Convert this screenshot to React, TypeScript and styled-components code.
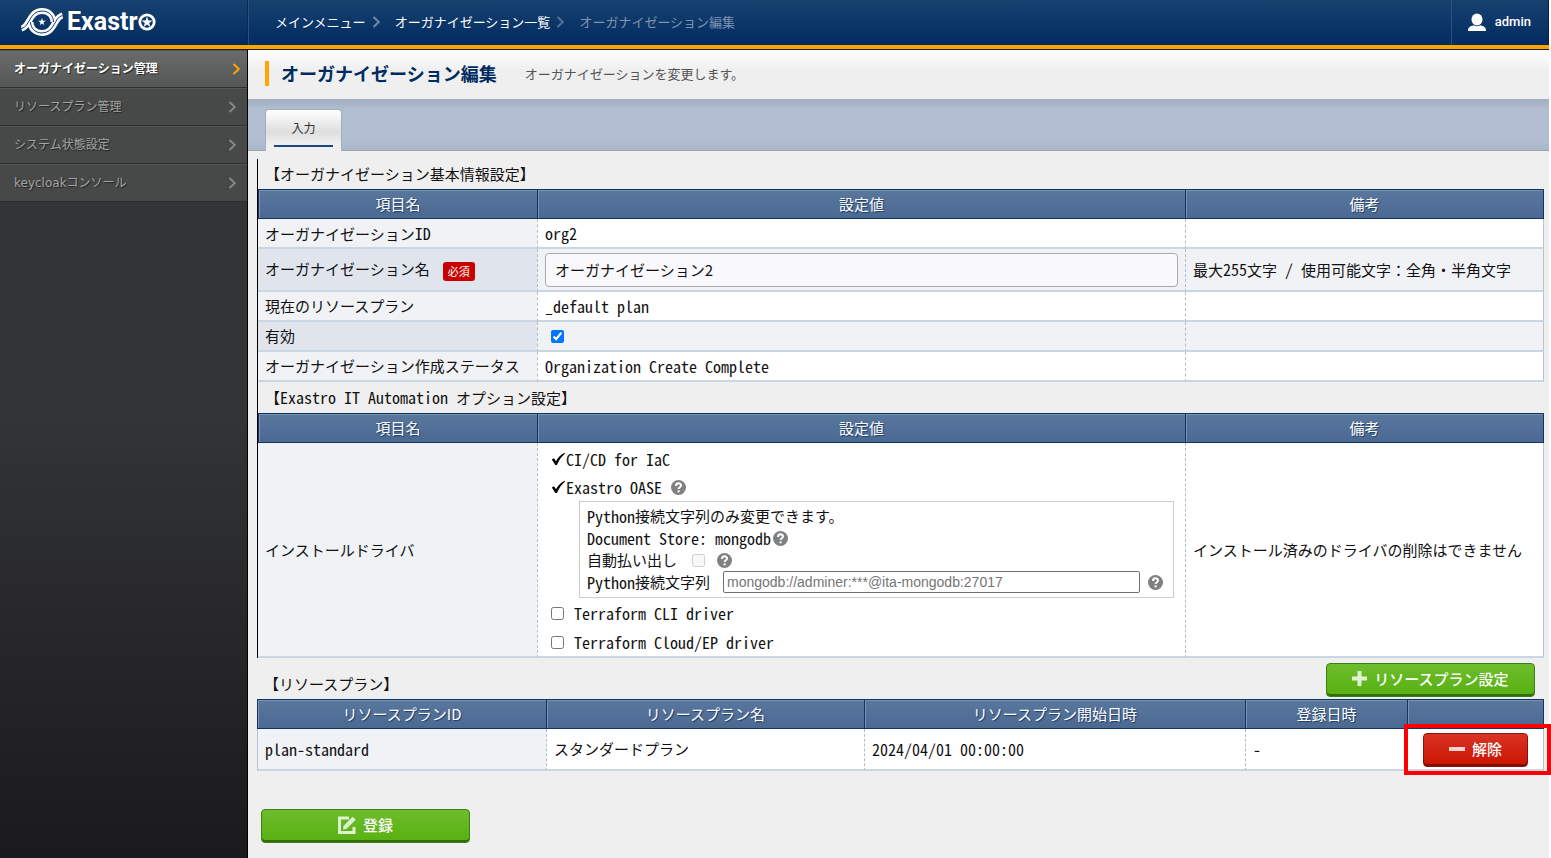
import React from "react";
import styled, { createGlobalStyle, css } from "styled-components";

const UI_FONT = '"Noto Sans CJK JP", "Noto Sans", sans-serif';

const GlobalStyle = createGlobalStyle`
  *, *::before, *::after { box-sizing: border-box; }
  html { background: #fff; }
  body { margin: 0; background: #fff; color: #222; font-family: ${UI_FONT}; font-size: 15px; }
  a { color: inherit; text-decoration: none; }
  h1, h2, p, ul, ol { margin: 0; padding: 0; font-weight: 400; }
  ul, ol { list-style: none; }
`;

const Page = styled.div`
  display: flex;
  flex-direction: column;
  min-height: 100vh;
  padding-right: 2px;
`;

const Header = styled.header`
  display: flex;
  height: 50px;
  flex: none;
  background: linear-gradient(#17416f, #002a60);
  border-bottom: 1px solid #1c1c1c;
  box-shadow: inset 0 -4px 0 #ffa500;
`;

const LogoLink = styled.a`
  display: flex;
  align-items: center;
  width: 248px;
  height: 45px;
  padding: 0 0 2px 20px;
  border-right: 1px solid #0a2a55;
  color: #fff;
  font: 700 25px/40px Roboto, sans-serif;
`;

const LogoMark = styled.svg`
  width: 44px;
  height: 32px;
  margin-right: 3px;
`;

const LogoStar = styled.svg`
  width: 18px;
  height: 18px;
`;

const Crumbs = styled.nav`
  flex: 1;
  height: 45px;
  border-left: 1px solid #2c5180;
  ol { display: flex; align-items: center; height: 43px; padding-left: 26px; }
  li { display: flex; align-items: center; color: #fff; font-size: 13px; line-height: 20px; }
  li > svg { margin: 0 14px 0 6px; }
`;

const CurrentCrumb = styled.span`
  color: #7f93b2;
`;

const UserButton = styled.button`
  display: flex;
  align-items: center;
  gap: 9px;
  height: 45px;
  padding: 0 17px 2px 16px;
  border: 0;
  border-left: 1px solid #2c5180;
  border-right: 1px solid #04204a;
  background: none;
  color: #fff;
  font: 500 13px/20px Roboto, sans-serif;
`;

const Body = styled.div`
  display: flex;
  flex: 1;
`;

const Sidebar = styled.nav`
  flex: none;
  width: 248px;
  border-right: 1px solid #000;
  background: linear-gradient(#333436, #333436 45%, #1a1a1c);
`;

const MenuLink = styled.a<{ $active?: boolean }>`
  display: flex;
  align-items: center;
  justify-content: space-between;
  height: 38px;
  padding: 0 10px 0 14px;
  border-top: 1px solid #555756;
  border-bottom: 1px solid #2c2d2d;
  background: #474948;
  color: #a3a3a3;
  font: 400 12px/20px "DejaVu Sans", ${UI_FONT};
  text-shadow: 1px 1px 1px #222;
  ${(p) =>
    p.$active &&
    css`
      padding-right: 6px;
      background: linear-gradient(#6a6c6b, #555756);
      color: #fff;
      font-weight: 700;
    `}
`;

const Main = styled.main`
  flex: 1;
  min-width: 0;
  background: #efefef;
`;

const TitleBar = styled.div`
  display: flex;
  align-items: center;
  height: 49px;
  padding: 0 0 2px 17px;
  background: linear-gradient(#fff, #efefef 20px);
`;

const Title = styled.h1`
  padding-left: 12px;
  border-left: 4px solid #ffa500;
  color: #002b62;
  font-size: 18px;
  font-weight: 700;
  line-height: 25px;
`;

const Lead = styled.p`
  margin-left: 28px;
  color: #555;
  font-size: 13px;
  line-height: 20px;
`;

const TabBar = styled.div`
  display: flex;
  align-items: flex-end;
  height: 52px;
  padding-left: 17px;
  border-bottom: 1px solid #9ba3af;
  background: linear-gradient(#9fadbf, #b1bdd0 10px, #b1bdd0 42px, #a9b6c8);
`;

const Tab = styled.button`
  width: 77px;
  height: 42px;
  margin-bottom: -1px;
  padding: 0 8px 4px;
  border: 1px solid #a5aebb;
  border-bottom: 0;
  border-radius: 4px 4px 0 0;
  background: linear-gradient(#fff, #dedede 22px, #efefef 34px);
  color: #333;
  font: 400 12px/35px ${UI_FONT};
`;

const TabLabel = styled.span`
  display: block;
  border-bottom: 2px solid #1c4780;
`;

const Content = styled.div`
  padding: 8px 5px 17px 9px;
`;

const Framed = styled.div`
  border-left: 1px solid #000;
`;

const SectionTitle = styled.h2`
  padding-left: 7px;
  color: #111;
  font-size: 15px;
  line-height: 30px;
`;

const Latin = styled.span`
  font-size: 16px;
  font-feature-settings: "hwid";
`;

const Grid = styled.table`
  width: 100%;
  table-layout: fixed;
  border-collapse: separate;
  border-spacing: 0;
  color: #111;
  line-height: 22px;
`;

const Col = styled.col<{ $w?: number }>`
  width: ${(p) => (p.$w ? `${p.$w}px` : "auto")};
`;

const HeadCell = styled.th`
  height: 30px;
  padding: 0;
  border: solid #0e3468;
  border-width: 1px 0 1px 1px;
  background: linear-gradient(#5a779e, #4c6a91);
  box-shadow: inset 1px 1px 0 #7c92b1;
  color: #fff;
  font-size: 15px;
  font-weight: 400;
  line-height: 26px;
  text-shadow: 1px 1px 1px #1d3c66;
  &:last-child { border-right-width: 1px; }
`;

const Row = styled.tr<{ $h?: number; $alt?: boolean }>`
  height: ${(p) => p.$h || 30}px;
  > th, > td {
    padding: 0 7px;
    border-bottom: 2px solid #cad6e2;
    text-align: left;
    font-weight: 400;
  }
  > th { background: ${(p) => (p.$alt ? "#e0e5ed" : "#f0f2f6")}; }
  > td {
    border-left: 1px dashed #aebcd2;
    background: ${(p) => (p.$alt ? "#f0f2f6" : "#fff")};
  }
  > td:last-child { border-right: 1px solid #b4c4d6; }
`;

const PlanGrid = styled(Grid)`
  tbody th { border-left: 1px solid #b4c4d6; }
`;

const Required = styled.span`
  display: inline-block;
  margin-left: 13px;
  padding: 0 5px;
  border-radius: 3px;
  background: #c80000;
  color: #fff;
  font-size: 11px;
  line-height: 19px;
  vertical-align: middle;
`;

const NameInput = styled.input`
  display: block;
  width: 100%;
  height: 34px;
  padding: 0 9px;
  border: 1px solid #aaa;
  border-radius: 4px;
  background: #f9f9fb;
  color: #111;
  font: 400 15px/22px ${UI_FONT};
`;

const Check = styled.input`
  display: block;
  flex: none;
  width: 13px;
  height: 13px;
  margin: 0 10px 0 6px;
`;

const Drivers = styled.ul`
  padding-top: 2px;
`;

const Driver = styled.li<{ $h: number }>`
  display: flex;
  align-items: center;
  height: ${(p) => p.$h}px;
  > label { display: flex; align-items: center; }
`;

const Installed = styled.svg`
  width: 15px;
  height: 14px;
  margin-left: 6px;
`;

const Detail = styled.div`
  margin: 0 4px 0 34px;
  padding: 3px 7px 4px;
  border: 1px solid #ccc;
`;

const DetailRow = styled.div`
  display: flex;
  align-items: center;
  height: 22px;
  > label { display: flex; align-items: center; flex: none; margin-right: 9px; }
`;

const Connection = styled.input`
  flex: 1;
  min-width: 0;
  height: 22px;
  margin: 0 8px 0 4px;
  padding: 0 3px;
  border: 1px solid #6f6f6f;
  border-radius: 2px;
  background: #fff;
  font: 400 14px/18px "Liberation Sans", sans-serif;
  &::placeholder { color: #757575; opacity: 1; }
`;

const HelpButton = styled.button<{ $gap?: number }>`
  display: block;
  flex: none;
  height: 15px;
  margin: 0 3px 0 ${(p) => p.$gap || 0}px;
  padding: 0;
  border: 0;
  background: none;
`;

const PlanHead = styled.div`
  display: flex;
  align-items: center;
  justify-content: space-between;
  height: 41px;
  padding: 2px 9px 0 0;
  ${SectionTitle} { padding: 8px 0 0 7px; }
`;

const ActionButton = styled.button<{ $danger?: boolean; $wide?: boolean }>`
  display: flex;
  align-items: center;
  justify-content: center;
  gap: 7px;
  width: ${(p) => (p.$wide ? "209px" : "105px")};
  height: 34px;
  padding: 0 0 2px;
  border: 1px solid ${(p) => (p.$danger ? "#8e1209" : "#3f7d17")};
  border-radius: 4px;
  background: ${(p) => (p.$danger ? "linear-gradient(#d93325, #cb1400)" : "linear-gradient(#6dbd2c, #58b011)")};
  box-shadow: inset 0 -2px 0 ${(p) => (p.$danger ? "#7f0d00" : "#2f6d06")};
  color: #fff;
  font: 500 15px/24px ${UI_FONT};
`;

const Release = styled.div`
  position: relative;
  padding: 2px 0 0 8px;
  &::after {
    content: "";
    position: absolute;
    inset: -7px -15px -8px -11px;
    border: 4px solid #f00;
    pointer-events: none;
  }
`;

const Footer = styled.div`
  padding: 38px 0 0 4px;
`;

const Chevron = ({ color }: { color: string }) => (
  <svg width="9" height="12" viewBox="0 0 9 12" fill="none" stroke={color} strokeWidth="2" aria-hidden="true">
    <path d="M1.5 1 6.8 6 1.5 11" />
  </svg>
);

const Help = ({ gap }: { gap?: number }) => (
  <HelpButton type="button" $gap={gap} aria-label="ヘルプ">
    <svg width="15" height="15" viewBox="0 0 15 15" aria-hidden="true">
      <circle cx="7.5" cy="7.5" r="7.5" fill="#808080" />
      <path d="M5 6c0-3.600 5-3.300 5-.5 0 1.700-2.400 1.700-2.400 3.600" fill="none" stroke="#fff" strokeWidth="2" />
      <rect x="6.600" y="10.300" width="2" height="2" fill="#fff" />
    </svg>
  </HelpButton>
);

const Tick = () => (
  <Installed viewBox="0 0 15 14" role="img" aria-label="インストール済み">
    <path d="M.8 7.500 3 6.300 5 9.300C7 5.500 10 2.500 13.600.8L14 1.400C10.500 4.500 8 8 6 13L4.300 13Z" fill="#000" />
  </Installed>
);

const STAR = "M0-5 1.200-1.600 4.800-1.500 1.900.6 2.900 4 0 2-2.900 4-1.900.6-4.800-1.500-1.200-1.600Z";
const RIBBON_TOP = "M1.500 22.500C10 21 9 5 22 5 29 5 33.500 10 33.500 16";
const RIBBON_BOTTOM = "M42.500 9.500C34 11 35 27 22 27 15 27 10.500 22 10.500 16";

const Head = ({ names }: { names: string[] }) => (
  <thead>
    <tr>
      {names.map((n, i) => (
        <HeadCell key={i} scope="col">{n}</HeadCell>
      ))}
    </tr>
  </thead>
);

const MENU = ["オーガナイゼーション管理", "リソースプラン管理", "システム状態設定", "keycloakコンソール"];

export default function App() {
  return (
    <Page lang="ja">
      <GlobalStyle />
      <Header>
        <LogoLink href="#">
          <LogoMark viewBox="0 0 44 32" fill="none" aria-hidden="true">
            <path d={RIBBON_TOP} stroke="#fff" strokeWidth="6" />
            <path d={RIBBON_BOTTOM} stroke="#fff" strokeWidth="6" />
            <path d={RIBBON_TOP} stroke="#12396c" strokeWidth="1" />
            <path d={RIBBON_BOTTOM} stroke="#12396c" strokeWidth="1" />
            <path d={STAR} transform="translate(22 16) scale(.8)" fill="#fff" />
          </LogoMark>
          Exastr
          <LogoStar viewBox="0 0 18 18" aria-label="o" role="img">
            <circle cx="9" cy="9" r="7.200" fill="none" stroke="#fff" strokeWidth="2.800" />
            <path d={STAR} transform="translate(9 9.300) scale(1.150)" fill="#fff" />
          </LogoStar>
        </LogoLink>
        <Crumbs aria-label="パンくず">
          <ol>
            <li><a href="#">メインメニュー</a><Chevron color="#7188a8" /></li>
            <li><a href="#">オーガナイゼーション一覧</a><Chevron color="#54709a" /></li>
            <li><CurrentCrumb aria-current="page">オーガナイゼーション編集</CurrentCrumb></li>
          </ol>
        </Crumbs>
        <UserButton type="button">
          <svg width="18" height="18" viewBox="0 0 18 18" fill="#fff" aria-hidden="true">
            <ellipse cx="9" cy="6.500" rx="5.500" ry="6" />
            <path d="M0 18C0 14.500 2 13.300 5.500 12.300 7.500 13.500 10.500 13.500 12.500 12.300 16 13.300 18 14.500 18 18Z" />
          </svg>
          admin
        </UserButton>
      </Header>
      <Body>
        <Sidebar>
          <ul>
            {MENU.map((m, i) => (
              <li key={m}>
                <MenuLink href="#" $active={i === 0}>
                  {m}
                  <Chevron color={i === 0 ? "#ffa500" : "#858585"} />
                </MenuLink>
              </li>
            ))}
          </ul>
        </Sidebar>
        <Main>
          <TitleBar>
            <Title>オーガナイゼーション編集</Title>
            <Lead>オーガナイゼーションを変更します。</Lead>
          </TitleBar>
          <TabBar>
            <Tab type="button"><TabLabel>入力</TabLabel></Tab>
          </TabBar>
          <Content>
            <Framed>
              <SectionTitle>【オーガナイゼーション基本情報設定】</SectionTitle>
              <Grid>
                <colgroup><Col $w={279} /><Col /><Col $w={359} /></colgroup>
                <Head names={["項目名", "設定値", "備考"]} />
                <tbody>
                  <Row>
                    <th scope="row">オーガナイゼーション<Latin>ID</Latin></th>
                    <td><Latin>org2</Latin></td>
                    <td />
                  </Row>
                  <Row $h={43} $alt>
                    <th scope="row"><label htmlFor="org-name">オーガナイゼーション名</label><Required>必須</Required></th>
                    <td><NameInput id="org-name" defaultValue="オーガナイゼーション2" /></td>
                    <td>最大<Latin>255</Latin>文字<Latin> / </Latin>使用可能文字：全角・半角文字</td>
                  </Row>
                  <Row>
                    <th scope="row">現在のリソースプラン</th>
                    <td><Latin>_default plan</Latin></td>
                    <td />
                  </Row>
                  <Row $alt>
                    <th scope="row"><label htmlFor="enabled">有効</label></th>
                    <td><Check id="enabled" type="checkbox" defaultChecked /></td>
                    <td />
                  </Row>
                  <Row>
                    <th scope="row">オーガナイゼーション作成ステータス</th>
                    <td><Latin>Organization Create Complete</Latin></td>
                    <td />
                  </Row>
                </tbody>
              </Grid>
              <SectionTitle>【<Latin>Exastro IT Automation </Latin>オプション設定】</SectionTitle>
              <Grid>
                <colgroup><Col $w={279} /><Col /><Col $w={359} /></colgroup>
                <Head names={["項目名", "設定値", "備考"]} />
                <tbody>
                  <Row>
                    <th scope="row">インストールドライバ</th>
                    <td>
                      <Drivers>
                        <Driver $h={28}><Tick /><Latin>CI/CD for IaC</Latin></Driver>
                        <Driver $h={28}><Tick /><Latin>Exastro OASE</Latin><Help gap={9} /></Driver>
                        <li>
                          <Detail>
                            <DetailRow><Latin>Python</Latin>接続文字列のみ変更できます。</DetailRow>
                            <DetailRow><Latin>Document Store: mongodb</Latin><Help gap={2} /></DetailRow>
                            <DetailRow>
                              <label htmlFor="auto-issue">自動払い出し</label>
                              <Check id="auto-issue" type="checkbox" disabled />
                              <Help gap={2} />
                            </DetailRow>
                            <DetailRow>
                              <label htmlFor="py-conn"><Latin>Python</Latin>接続文字列</label>
                              <Connection id="py-conn" placeholder="mongodb://adminer:***@ita-mongodb:27017" />
                              <Help />
                            </DetailRow>
                          </Detail>
                        </li>
                        <Driver $h={30}><label><Check type="checkbox" /><Latin>Terraform CLI driver</Latin></label></Driver>
                        <Driver $h={28}><label><Check type="checkbox" /><Latin>Terraform Cloud/EP driver</Latin></label></Driver>
                      </Drivers>
                    </td>
                    <td>インストール済みのドライバの削除はできません</td>
                  </Row>
                </tbody>
              </Grid>
            </Framed>
            <PlanHead>
              <SectionTitle>【リソースプラン】</SectionTitle>
              <ActionButton type="button" $wide>
                <svg width="15" height="15" viewBox="0 0 15 15" stroke="#e0f2d3" strokeWidth="4" aria-hidden="true"><path d="M7.500 0V15M0 7.500H15" /></svg>
                リソースプラン設定
              </ActionButton>
            </PlanHead>
            <PlanGrid>
              <colgroup><Col $w={289} /><Col $w={318} /><Col /><Col $w={162} /><Col $w={137} /></colgroup>
              <Head names={["リソースプランID", "リソースプラン名", "リソースプラン開始日時", "登録日時", ""]} />
              <tbody>
                <Row $h={42}>
                  <th scope="row"><Latin>plan-standard</Latin></th>
                  <td>スタンダードプラン</td>
                  <td><Latin>2024/04/01 00:00:00</Latin></td>
                  <td><Latin>-</Latin></td>
                  <td>
                    <Release>
                      <ActionButton type="button" $danger>
                        <svg width="16" height="4" viewBox="0 0 16 4" aria-hidden="true"><rect width="16" height="4" fill="#f6d3cf" /></svg>
                        解除
                      </ActionButton>
                    </Release>
                  </td>
                </Row>
              </tbody>
            </PlanGrid>
            <Footer>
              <ActionButton type="button" $wide>
                <svg width="18" height="18" viewBox="0 0 18 18" fill="none" stroke="#dff2d0" strokeWidth="3" aria-hidden="true">
                  <path d="M11 2H1.500V16.500H16V11" />
                  <path d="M5 13.500 5.500 10 14.500.8 17.800 3.800 8.300 13Z" fill="#dff2d0" stroke="none" />
                </svg>
                登録
              </ActionButton>
            </Footer>
          </Content>
        </Main>
      </Body>
    </Page>
  );
}
